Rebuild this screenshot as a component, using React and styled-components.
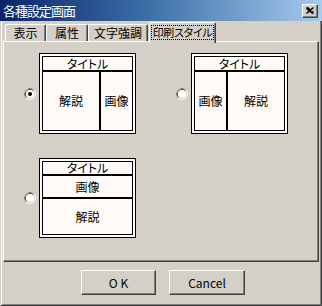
import React from "react";
import styled, { createGlobalStyle } from "styled-components";

const Global = createGlobalStyle`
  html, body { margin: 0; padding: 0; background: #d4d0c8; }
  body { font-family: "Noto Sans CJK JP", "Liberation Sans", sans-serif; font-size: 12px; }
  * { box-sizing: border-box; }
`;

const Window = styled.div`
  width: 322px;
  height: 306px;
  background: #d4d0c8;
  display: flex;
  flex-direction: column;
  font-family: "Noto Sans CJK JP", sans-serif;
  font-feature-settings: "palt";
  color: #000;
`;

const TitleBar = styled.div`
  height: 21px;
  flex: none;
  display: flex;
  align-items: center;
  justify-content: space-between;
  padding: 0 3px 0 3px;
  background: linear-gradient(to right, #0a246a 0%, #3a6ea5 45%, #a6caf0 100%);
`;

const TitleText = styled.span`
  color: #fff;
  font-size: 13px;
  line-height: 14px;
  letter-spacing: -1px;
  font-feature-settings: normal;
`;

const CloseButton = styled.div`
  width: 16px;
  height: 14px;
  background: #d4d0c8;
  border-top: 1px solid #fff;
  border-left: 1px solid #fff;
  border-right: 1px solid #404040;
  border-bottom: 1px solid #404040;
  box-shadow: inset -1px -1px 0 #808080;
  display: flex;
  align-items: center;
  justify-content: center;
  padding-bottom: 1px;
  margin-right: 1px;
`;

const Body = styled.div`
  flex: 1;
  display: flex;
  flex-direction: column;
  padding: 1px 2px 0 2px;
  border-left: 1px solid #d4d0c8;
  border-right: 1px solid #404040;
  border-bottom: 1px solid #404040;
  box-shadow: inset 1px 0 0 #fff, inset -1px -1px 0 #808080;
`;

const TabRow = styled.div`
  display: flex;
  align-items: flex-start;
  height: 19px;
  padding-left: 2px;
  position: relative;
  z-index: 1;
`;

const Tab = styled.div`
  width: ${(p) => p.$w}px;
  height: ${(p) => (p.$active ? 21 : 17)}px;
  margin-top: ${(p) => (p.$active ? 0 : 2)}px;
  margin-left: ${(p) => (p.$active ? 1 : 0)}px;
  background: #d4d0c8;
  border-top: 1px solid #fff;
  border-left: 1px solid #fff;
  border-right: 1px solid #404040;
  border-radius: 2px 2px 0 0;
  box-shadow: inset -1px 0 0 #808080;
  display: flex;
  align-items: center;
  justify-content: center;
  padding-bottom: ${(p) => (p.$active ? 2 : 0)}px;
  font-size: 12px;
  line-height: 14px;
  white-space: nowrap;
`;

const Focus = styled.span`
  border: 1px dotted #000;
  padding: 0 1px;
  font-size: 11px;
  line-height: 13px;
  letter-spacing: -0.3px;
  white-space: nowrap;
`;

const Panel = styled.div`
  height: 221px;
  border-top: 1px solid #fff;
  border-left: 1px solid #fff;
  border-right: 1px solid #404040;
  border-bottom: 1px solid #404040;
  box-shadow: inset -1px -1px 0 #808080;
  padding: 11px 0 0 20px;
  display: grid;
  grid-template-columns: 152px 152px;
  grid-auto-rows: min-content;
  row-gap: 24px;
`;

const Option = styled.div`
  display: flex;
  align-items: center;
  gap: 3px;
`;

const Frame = styled.div`
  width: 97px;
  height: ${(p) => p.$h}px;
  border: 1px solid #000;
  background: #fff;
  padding: 2px;
  display: flex;
`;

const Sheet = styled.div`
  flex: 1;
  border: 1px solid #000;
  background: #fffaf5;
  display: flex;
  flex-direction: column;
`;

const Cell = styled.div`
  height: ${(p) => (p.$h ? `${p.$h}px` : "auto")};
  width: ${(p) => (p.$w ? `${p.$w}px` : "auto")};
  flex: ${(p) => (p.$grow ? 1 : "none")};
  display: flex;
  align-items: center;
  justify-content: center;
  font-size: 12px;
  line-height: 12px;
  ${(p) => (p.$lineBottom ? "border-bottom: 2px solid #000;" : "")}
  ${(p) => (p.$lineRight ? "border-right: 2px solid #000;" : "")}
`;

const Split = styled.div`
  flex: 1;
  display: flex;
`;

const Buttons = styled.div`
  display: flex;
  gap: 13px;
  margin: 8px 0 0 78px;
`;

const Button = styled.div`
  width: ${(p) => p.$w}px;
  height: 25px;
  background: #d4d0c8;
  border-top: 1px solid #fff;
  border-left: 1px solid #fff;
  border-right: 1px solid #404040;
  border-bottom: 1px solid #404040;
  box-shadow: inset -1px -1px 0 #808080;
  display: flex;
  align-items: center;
  justify-content: center;
  font-size: 12px;
  line-height: 14px;
`;

const Radio = ({ checked }) => (
  <svg width="12" height="12" viewBox="0 0 12 12" style={{ flex: "none" }}>
    <circle cx="6" cy="6" r="5.5" fill="none" stroke="#fff" />
    <path d="M2.11 9.89 A5.5 5.5 0 0 1 9.89 2.11" fill="none" stroke="#808080" />
    <circle cx="6" cy="6" r="4.5" fill="none" stroke="#d4d0c8" />
    <path d="M2.82 9.18 A4.5 4.5 0 0 1 9.18 2.82" fill="none" stroke="#404040" />
    <circle cx="6" cy="6" r="4" fill="#fff" />
    {checked && <circle cx="6" cy="6" r="2" fill="#000" />}
  </svg>
);

export default function App() {
  return (
    <>
      <Global />
      <Window>
        <TitleBar>
          <TitleText>各種設定画面</TitleText>
          <CloseButton>
            <svg width="8" height="7" viewBox="0 0 8 7">
              <path d="M0.5 0.5 L7.5 6.5 M1.5 0.5 L7.5 5.5 M0.5 1.5 L6.5 6.5 M7.5 0.5 L0.5 6.5" stroke="#000" strokeWidth="1.4" fill="none" />
            </svg>
          </CloseButton>
        </TitleBar>
        <Body>
          <TabRow>
            <Tab $w={41}>表示</Tab>
            <Tab $w={42}>属性</Tab>
            <Tab $w={60}>文字強調</Tab>
            <Tab $w={67} $active>
              <Focus>印刷スタイル</Focus>
            </Tab>
          </TabRow>
          <Panel>
            <Option>
              <Radio checked />
              <Frame $h={81}>
                <Sheet>
                  <Cell $h={15} $lineBottom>タイトル</Cell>
                  <Split>
                    <Cell $w={58} $lineRight>解説</Cell>
                    <Cell $grow>画像</Cell>
                  </Split>
                </Sheet>
              </Frame>
            </Option>
            <Option>
              <Radio />
              <Frame $h={81}>
                <Sheet>
                  <Cell $h={15} $lineBottom>タイトル</Cell>
                  <Split>
                    <Cell $w={33} $lineRight>画像</Cell>
                    <Cell $grow>解説</Cell>
                  </Split>
                </Sheet>
              </Frame>
            </Option>
            <Option>
              <Radio />
              <Frame $h={80}>
                <Sheet>
                  <Cell $h={14} $lineBottom>タイトル</Cell>
                  <Cell $h={23} $lineBottom>画像</Cell>
                  <Cell $grow>解説</Cell>
                </Sheet>
              </Frame>
            </Option>
          </Panel>
          <Buttons>
            <Button $w={75}>O K</Button>
            <Button $w={76}>Cancel</Button>
          </Buttons>
        </Body>
      </Window>
    </>
  );
}
